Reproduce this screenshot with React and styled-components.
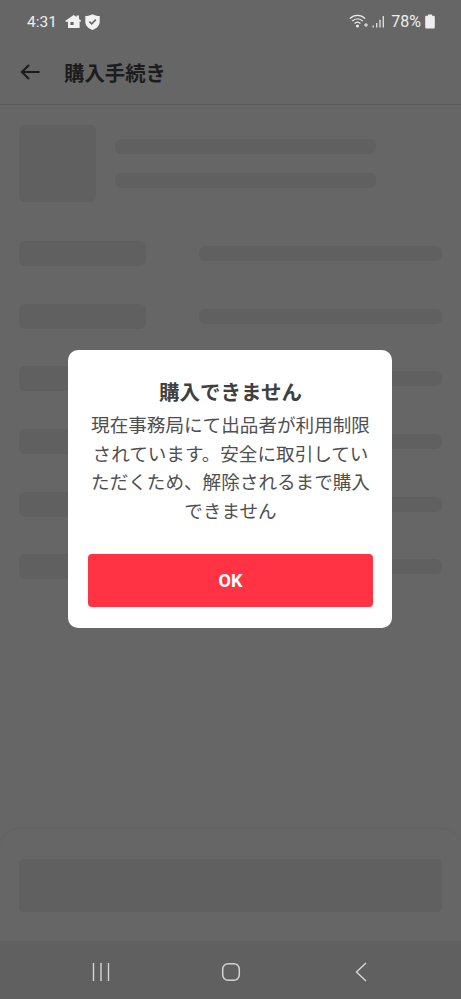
import styled, { createGlobalStyle } from "styled-components";

const GlobalStyle = createGlobalStyle`
  html, body {
    margin: 0;
    padding: 0;
    background: #666666;
  }
  * {
    box-sizing: border-box;
  }
`;

const FONT = `"Noto Sans CJK JP", "Noto Sans", sans-serif`;

const HomeIcon = () => (
  <svg width="16" height="15" viewBox="0 0 16 14">
    <path
      fill="#f2f2f2"
      fillRule="evenodd"
      d="M8.6 0.4 11.6 2.6V0.9H14V4.4L16 5.9V7H14.6V13.6H3V7.3H0.4V6.2ZM5.4 7.6V10.6H8.6V7.6Z"
    />
  </svg>
);

const ShieldIcon = () => (
  <svg width="15" height="16" viewBox="0 0 15 16">
    <path
      fill="#f2f2f2"
      d="M7.5 0.3C9.6 1.5 12 2 14.7 2.1V7.4C14.7 11.2 12 14.4 7.5 15.9 3 14.4 0.3 11.2 0.3 7.4V2.1C3 2 5.4 1.5 7.5 0.3Z"
    />
    <path d="M4.4 7.6 6.7 9.8 10.8 5.6" fill="none" stroke="#666666" strokeWidth="1.6" />
  </svg>
);

const WifiIcon = () => (
  <svg width="19" height="15" viewBox="0 0 19 15">
    <g fill="none" stroke="#eeeeee" strokeWidth="1.3">
      <path d="M0.8 4.6C5.2 0.3 11.8 0.3 16.2 4.6" />
      <path d="M3.2 7.1C6.4 4 10.6 4 13.8 7.1" />
      <path d="M5.6 9.5C7.4 7.8 9.6 7.8 11.4 9.5" />
    </g>
    <circle cx="8.5" cy="12" r="1.5" fill="#eeeeee" />
    <path d="M15 11H19M17 9V13" fill="none" stroke="#eeeeee" strokeWidth="1" />
  </svg>
);

const SignalIcon = () => (
  <svg width="13" height="13" viewBox="0 0 13 13">
    <path
      d="M1.2 10.5V12.5M4.7 8V12.5M8 4.8V12.5M11.3 1V12.5"
      fill="none"
      stroke="#e2e2e2"
      strokeWidth="1.3"
    />
  </svg>
);

const BatteryIcon = () => (
  <svg width="10" height="15" viewBox="0 0 10 15">
    <path
      fill="#eeeeee"
      d="M3 0.5H7V1.8H8.4C9.3 1.8 9.8 2.3 9.8 3.2V13.2C9.8 14.1 9.3 14.6 8.4 14.6H1.6C0.7 14.6 0.2 14.1 0.2 13.2V3.2C0.2 2.3 0.7 1.8 1.6 1.8H3Z"
    />
  </svg>
);

const BackIcon = () => (
  <svg width="20" height="16" viewBox="0 0 20 16">
    <path d="M19.5 8H2M9 1 1.9 8 9 15" fill="none" stroke="#1a1a1a" strokeWidth="2" />
  </svg>
);

const App = () => {
  return (
    <Page lang="ja">
      <GlobalStyle />
      <StatusBar>
        <StatusGroup>
          <Clock>4:31</Clock>
          <HomeIcon />
          <ShieldIcon />
        </StatusGroup>
        <StatusGroup>
          <WifiIcon />
          <SignalIcon />
          <Percent>78%</Percent>
          <BatteryIcon />
        </StatusGroup>
      </StatusBar>

      <Header>
        <BackIcon />
        <HeaderTitle>購入手続き</HeaderTitle>
      </Header>

      <Content>
        <Product>
          <Thumb />
          <ProductLines>
            <Line />
            <Line />
          </ProductLines>
        </Product>
        <Rows>
          {[0, 1, 2, 3, 4, 5].map((i) => (
            <Row key={i}>
              <RowLabel />
              <RowValue />
            </Row>
          ))}
        </Rows>
      </Content>

      <BottomPanel>
        <PanelButton />
      </BottomPanel>

      <NavBar>
        <NavSlot>
          <svg width="18" height="18" viewBox="0 0 18 18">
            <path d="M1.5 0V18M9 0V18M16.5 0V18" fill="none" stroke="#d4d4d4" strokeWidth="1.4" />
          </svg>
        </NavSlot>
        <NavSlot>
          <svg width="20" height="20" viewBox="0 0 20 20">
            <rect x="1.7" y="1.7" width="16.6" height="16.6" rx="5.5" fill="none" stroke="#d4d4d4" strokeWidth="1.5" />
          </svg>
        </NavSlot>
        <NavSlot>
          <svg width="12" height="20" viewBox="0 0 12 20">
            <path d="M11 1 1.5 10 11 19" fill="none" stroke="#d4d4d4" strokeWidth="1.5" />
          </svg>
        </NavSlot>
      </NavBar>

      <Overlay>
        <Modal>
          <ModalTitle>購入できません</ModalTitle>
          <ModalText>
            現在事務局にて出品者が利用制限されています。安全に取引していただくため、解除されるまで購入できません
          </ModalText>
          <OkButton>OK</OkButton>
        </Modal>
      </Overlay>
    </Page>
  );
};

export default App;

const Page = styled.div`
  position: relative;
  display: flex;
  flex-direction: column;
  width: 461px;
  height: 999px;
  overflow: hidden;
  background-color: #666666;
  font-family: ${FONT};
`;
const StatusBar = styled.div`
  display: flex;
  justify-content: space-between;
  align-items: center;
  height: 43px;
  padding: 0 26px 0 27px;
`;
const StatusGroup = styled.div`
  display: flex;
  align-items: center;
  gap: 4px;
`;
const Clock = styled.span`
  margin-right: 4px;
  color: #eeeeee;
  font-family: Roboto, sans-serif;
  font-size: 15.5px;
`;
const Percent = styled.span`
  margin-left: 2px;
  color: #eeeeee;
  font-family: Roboto, sans-serif;
  font-size: 16px;
`;
const Header = styled.div`
  display: flex;
  align-items: center;
  gap: 24px;
  height: 62px;
  padding: 0 0 4px 20px;
  border-bottom: 1px solid #595959;
`;
const HeaderTitle = styled.h1`
  margin: 0;
  color: #1c1c1c;
  font-size: 20.4px;
  font-weight: 700;
  line-height: 28px;
`;
const Content = styled.div`
  flex: 1;
  padding: 20px 19px 0;
`;
const Product = styled.div`
  display: flex;
  align-items: center;
  gap: 19px;
`;
const Thumb = styled.div`
  width: 77px;
  height: 77px;
  border-radius: 6px;
  background-color: #606060;
`;
const ProductLines = styled.div`
  display: flex;
  flex-direction: column;
  gap: 19.5px;
`;
const Line = styled.div`
  width: 261px;
  height: 15px;
  border-radius: 6px;
  background-color: #606060;
`;
const Rows = styled.div`
  display: flex;
  flex-direction: column;
  gap: 37.7px;
  margin-top: 39px;
`;
const Row = styled.div`
  display: flex;
  align-items: center;
  justify-content: space-between;
`;
const RowLabel = styled.div`
  width: 127px;
  height: 25px;
  border-radius: 6px;
  background-color: #606060;
`;
const RowValue = styled.div`
  width: 243px;
  height: 15px;
  border-radius: 6px;
  background-color: #606060;
`;
const BottomPanel = styled.div`
  height: 112px;
  padding: 30px 19px 0;
  border-radius: 20px 20px 0 0;
  background-color: #666666;
  box-shadow: 0 -1px 3px rgba(0, 0, 0, 0.04);
`;
const PanelButton = styled.div`
  height: 53px;
  border-radius: 5px;
  background-color: #606060;
`;
const NavBar = styled.div`
  display: flex;
  justify-content: center;
  height: 58px;
  padding-left: 1px;
  background-color: #606060;
`;
const NavSlot = styled.div`
  display: flex;
  align-items: center;
  justify-content: center;
  width: 130px;
  height: 62px;
`;
const Overlay = styled.div`
  position: absolute;
  inset: 0;
  display: flex;
  align-items: center;
  justify-content: center;
  padding: 0 1px 21px 0;
`;
const Modal = styled.div`
  display: flex;
  flex-direction: column;
  align-items: center;
  width: 324px;
  height: 278px;
  padding: 26px 19px 0 20px;
  border-radius: 10px;
  background-color: #ffffff;
`;
const ModalTitle = styled.h2`
  margin: 0 0 4px;
  color: #404040;
  font-size: 20.5px;
  font-weight: 700;
  line-height: 30px;
`;
const ModalText = styled.p`
  margin: 0;
  color: #4f4f4f;
  font-size: 18.6px;
  font-weight: 400;
  line-height: 28.5px;
  text-align: center;
`;
const OkButton = styled.button`
  flex-shrink: 0;
  width: 285px;
  height: 53px;
  margin-top: 30px;
  border: none;
  border-radius: 4px;
  background-color: #ff3344;
  color: #ffffff;
  font-family: Roboto, sans-serif;
  font-size: 18px;
  font-weight: 700;
`;
